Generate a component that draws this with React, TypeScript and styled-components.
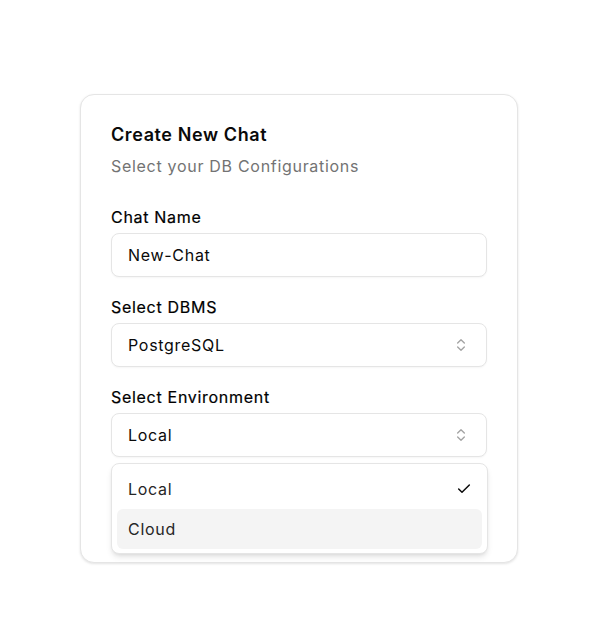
import React, { useState } from 'react'
import styled, { createGlobalStyle } from 'styled-components'

const GlobalStyle = createGlobalStyle`
  html, body {
    margin: 0;
    padding: 0;
    background: #ffffff;
    font-family: Inter, "Noto Sans", "Liberation Sans", sans-serif;
    color: #0a0a0a;
  }
  * {
    box-sizing: border-box;
  }
`

const Page = styled.div`
  padding: 94px 0 60px 80px;
`

const Card = styled.div`
  width: 438px;
  background: #ffffff;
  border: 1px solid #e5e5e5;
  border-radius: 14px;
  box-shadow: 0 1px 3px rgba(0, 0, 0, 0.08), 0 1px 2px rgba(0, 0, 0, 0.04);
  padding: 26px 30px 29px;
  display: flex;
  flex-direction: column;
  letter-spacing: 0.7px;
`

const Title = styled.h2`
  margin: 0;
  font-size: 18px;
  line-height: 28px;
  font-weight: 600;
  letter-spacing: 0.6px;
`

const Subtitle = styled.p`
  margin: 5px 0 27px;
  font-size: 16px;
  line-height: 24px;
  color: #737373;
`

const Field = styled.div<{ $last?: boolean }>`
  position: relative;
  display: flex;
  flex-direction: column;
  gap: 4px;
  margin-bottom: ${(p) => (p.$last ? '32px' : '18px')};
`

const Label = styled.label`
  font-size: 16px;
  line-height: 24px;
  font-weight: 400;
  color: #000000;
  -webkit-text-stroke: 0.2px #000000;
`

const Input = styled.input`
  height: 44px;
  width: 100%;
  border: 1px solid #e5e5e5;
  border-radius: 8px;
  padding: 0 16px;
  font-family: inherit;
  font-size: 16px;
  letter-spacing: inherit;
  color: #0a0a0a;
  background: #ffffff;
  box-shadow: 0 1px 2px rgba(0, 0, 0, 0.04);
  outline: none;
`

const Trigger = styled.button`
  height: 44px;
  width: 100%;
  border: 1px solid #e5e5e5;
  border-radius: 8px;
  padding: 0 17px 0 16px;
  font-family: inherit;
  font-size: 16px;
  letter-spacing: inherit;
  color: #0a0a0a;
  background: #ffffff;
  box-shadow: 0 1px 2px rgba(0, 0, 0, 0.04);
  display: flex;
  align-items: center;
  justify-content: space-between;
  cursor: pointer;
  text-align: left;
`

const SubmitButton = styled.button`
  height: 44px;
  width: 100%;
  border: none;
  border-radius: 8px;
  background: #171717;
  color: #fafafa;
  font-family: inherit;
  font-size: 16px;
  font-weight: 500;
`

const Menu = styled.div`
  position: absolute;
  top: calc(100% + 6px);
  left: 0;
  width: 377px;
  background: #ffffff;
  border: 1px solid #e5e5e5;
  border-radius: 8px;
  box-shadow: 0 4px 6px -1px rgba(0, 0, 0, 0.1), 0 2px 4px -2px rgba(0, 0, 0, 0.1);
  padding: 5px 5px 4px;
  z-index: 10;
`

const Item = styled.div<{ $active?: boolean }>`
  height: 40px;
  border-radius: 6px;
  padding: 0 10px 0 11px;
  display: flex;
  align-items: center;
  justify-content: space-between;
  font-size: 16px;
  color: #262626;
  background: ${(p) => (p.$active ? '#f4f4f4' : 'transparent')};
  cursor: default;
`

const ChevronsIcon = () => (
  <svg width="16" height="16" viewBox="0 0 24 24" fill="none" stroke="#a3a3a3" strokeWidth="2" strokeLinecap="round" strokeLinejoin="round">
    <path d="m7 15 5 5 5-5" />
    <path d="m7 9 5-5 5 5" />
  </svg>
)

const CheckIcon = () => (
  <svg width="16" height="16" viewBox="0 0 24 24" fill="none" stroke="#0a0a0a" strokeWidth="2.2" strokeLinecap="round" strokeLinejoin="round">
    <path d="M20 6 9 17l-5-5" />
  </svg>
)

const environments = ['Local', 'Cloud']

const App: React.FC = () => {
  const [chatName, setChatName] = useState('New-Chat')
  const [env, setEnv] = useState('Local')
  const [open, setOpen] = useState(true)

  return (
    <>
      <GlobalStyle />
      <Page>
        <Card>
          <Title>Create New Chat</Title>
          <Subtitle>Select your DB Configurations</Subtitle>

          <Field>
            <Label>Chat Name</Label>
            <Input value={chatName} onChange={(e) => setChatName(e.target.value)} />
          </Field>

          <Field>
            <Label>Select DBMS</Label>
            <Trigger type="button">
              <span>PostgreSQL</span>
              <ChevronsIcon />
            </Trigger>
          </Field>

          <Field $last>
            <Label>Select Environment</Label>
            <Trigger type="button" onClick={() => setOpen(!open)}>
              <span>{env}</span>
              <ChevronsIcon />
            </Trigger>
            {open && (
              <Menu>
                {environments.map((item) => (
                  <Item
                    key={item}
                    $active={item === 'Cloud'}
                    onClick={() => {
                      setEnv(item)
                      setOpen(false)
                    }}
                  >
                    <span>{item}</span>
                    {item === env && <CheckIcon />}
                  </Item>
                ))}
              </Menu>
            )}
          </Field>

          <SubmitButton type="button">Create Chat</SubmitButton>
        </Card>
      </Page>
    </>
  )
}

export default App
